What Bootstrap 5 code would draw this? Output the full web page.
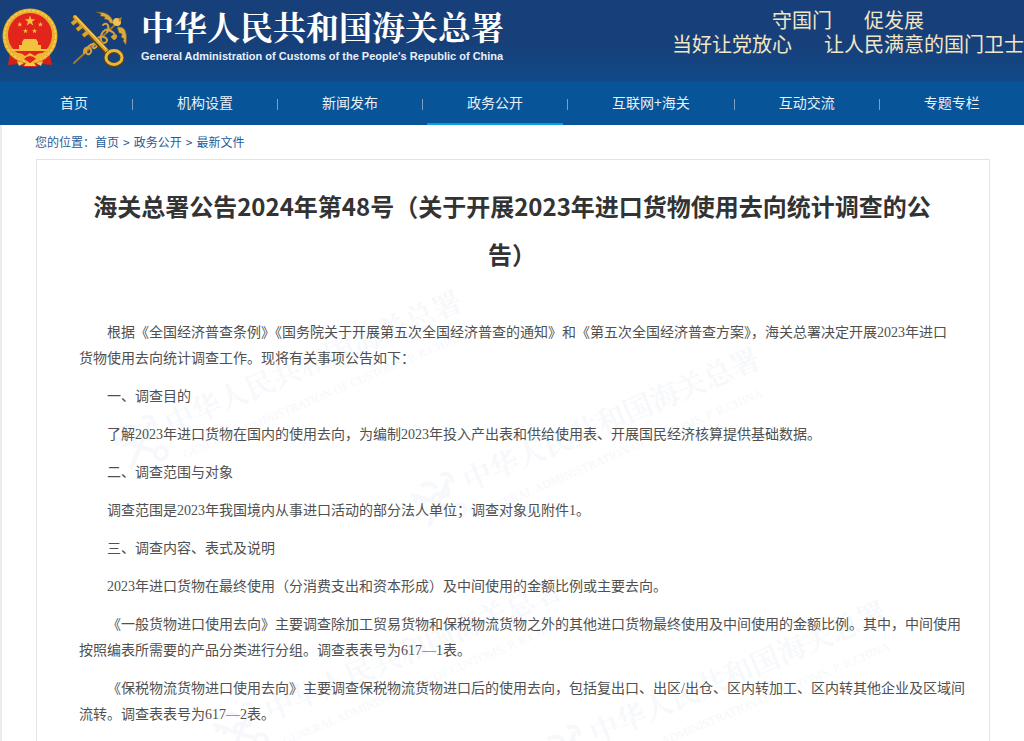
<!DOCTYPE html>
<html lang="zh-CN">
<head>
<meta charset="utf-8">
<meta name="viewport" content="width=device-width, initial-scale=1">
<title>海关总署公告2024年第48号</title>
<link rel="stylesheet" href="https://cdn.jsdelivr.net/npm/bootstrap@5.3.0/dist/css/bootstrap.min.css">
<style>
body { font-family: "Noto Sans CJK SC", sans-serif; color: #333; background: #fff; overflow-x: hidden; }
.site-head { background: linear-gradient(#173f79 0, #173f79 50%, #114a88 100%); height: 82px; }
.site-name { font-family: "Noto Serif CJK SC", "Noto Sans CJK SC", serif; font-size: 33px; line-height: 40px; font-weight: 700; color: #fff; }
.site-name-en { font-family: "Liberation Sans", sans-serif; font-size: 11px; line-height: 20px; font-weight: 700; color: #e9eff7; }
.site-title { padding: 6px 0 0 9px; }
.slogan { font-size: 20px; line-height: 24px; color: #f3e6c4; }
.slogan-row { gap: 32px; }
.main-nav { background: #075499; height: 43px; padding-left: 20px; }
.main-nav a { font-size: 14px; line-height: 41px; padding: 0 40px; color: #e8f0f8; border-bottom: 2px solid transparent; }
.main-nav a.active { border-color: #0a9be6; }
.main-nav li:last-child a { padding-right: 0; }
.main-nav li + li::before { content: ""; width: 1px; height: 11px; margin: 2px 4px 0; background: #7f9fc0; }
.page-body { border-left: 2px solid #ececec; padding: 0 34px 0 33px; }
.crumbs { font-size: 12px; line-height: 34px; color: #1f5c99; }
.crumbs a { color: inherit; }
.notice { border: 1px solid #e3e3e3; border-bottom: 0; padding: 22px 20px 24px 42px; margin-left: 1px; }
.notice-title { font-size: 24px; line-height: 48px; font-weight: 700; color: #333; margin: 0 36px 42px 12px; }
.notice p { font-family: "Liberation Serif", "Noto Sans CJK SC", serif; font-size: 14px; line-height: 26px; color: #505050; text-indent: 2em; margin-bottom: 12px; }
.watermark { left: 0; top: 0; pointer-events: none; color: #f6f8fb; z-index: -1; }
</style>
</head>
<body class="position-relative">
<header>
  <div class="site-head d-flex align-items-start text-nowrap">
    <svg class="flex-shrink-0" width="132" height="74" viewBox="0 0 132 74" aria-hidden="true">
      <path d="M10 52L8 65l11-1 5 3h12l5-3 11 1-3-14z" fill="#d41f1b"/>
      <circle cx="30" cy="36" r="27.500" fill="#e8ae2d"/>
      <circle cx="30" cy="36" r="25.500" fill="none" stroke="#f6d15b" stroke-width="1.500" stroke-dasharray="3 1.500"/>
      <circle cx="30" cy="35" r="22" fill="#e3241c"/>
      <g fill="#f3c23c">
        <path id="st" d="M30 15.500l1.300 3.800h4l-3.200 2.400 1.200 3.900-3.300-2.400-3.300 2.400 1.200-3.900-3.200-2.400h4z"/>
        <use href="#st" transform="translate(4.800 14) scale(.5)"/><use href="#st" transform="translate(25.400 14) scale(.5)"/>
        <use href="#st" transform="translate(10.500 20.500) scale(.5)"/><use href="#st" transform="translate(19.500 20.500) scale(.5)"/>
        <path d="M24 39h12l2 3H22zM22 42h16v3h3v4h8v2H11v-2h8v-4h3z"/>
      </g>
      <path d="M13 53q8-1 12 3l5-3 5 3q4-4 12-3-2 5-11 8H24q-9-3-11-8z" fill="#f0b934"/>
      <path d="M24 59q6-6 12 0l-6 4z" fill="#e3241c"/>
      <path d="M17 61l7 2-5 3zM43 61l-7 2 5 3zM26 63h8l2 3H24z" fill="#f4ca4d"/>
      <g fill="none" stroke-linecap="round">
        <path d="M74 63L117 23" stroke="#a97622" stroke-width="2"/>
        <path d="M84 53c-1-8 9-6 7-1s-8 1-3-5 12-2 7 1 1-14 9-11-2 10-3 3 4-12 8-10 8 4 4 8M103 25c5-4 7 3 4 7M112 37c4-4 6 0 2 2" stroke="#d4a13a" stroke-width="2"/>
        <path d="M75 18L108 53" stroke="#5b4216" stroke-width="6"/>
        <path d="M75 17L108 52" stroke="#d9a52f" stroke-width="4"/>
        <path d="M75 16L106 49" stroke="#ffe28a" stroke-width="1"/>
        <path d="M77 20l-5 4M82 26l-5 4M88 32l-5 4" stroke="#d8a232" stroke-width="4" stroke-linecap="butt"/>
        <ellipse cx="114" cy="58" rx="8" ry="7" stroke="#5b4216" stroke-width="5"/>
        <ellipse cx="114" cy="57.500" rx="8" ry="7" stroke="#e7b83b" stroke-width="3"/>
      </g>
      <path d="M96 12q15-1 18 12l-4-1-2-3-4-1 1-2-5-1 1-2zM117 27q12-2 9 18l-3-4 1-2-3-2 1-3-3-1z" fill="#d9aa41" stroke="#684e20" stroke-width=".6"/>
      <circle cx="117" cy="22" r="4" fill="#edc35a"/><path d="M118 19l4-2-2 5z" fill="#bd892b"/>
    </svg>
    <div class="site-title">
      <div class="site-name">中华人民共和国海关总署</div>
      <div class="site-name-en">General Administration of Customs of the People's Republic of China</div>
    </div>
    <div class="slogan ms-auto pt-2">
      <div class="slogan-row d-flex justify-content-center"><span>守国门</span><span>促发展</span></div>
      <div class="slogan-row d-flex justify-content-center"><span>当好让党放心</span><span>让人民满意的国门卫士</span></div>
    </div>
  </div>
  <nav class="main-nav" aria-label="主导航">
    <ul class="list-unstyled d-flex text-nowrap mb-0">
      <li class="d-flex align-items-center"><a class="d-block text-decoration-none" href="#">首页</a></li>
      <li class="d-flex align-items-center"><a class="d-block text-decoration-none" href="#">机构设置</a></li>
      <li class="d-flex align-items-center"><a class="d-block text-decoration-none" href="#">新闻发布</a></li>
      <li class="d-flex align-items-center"><a class="d-block text-decoration-none active" href="#" aria-current="page">政务公开</a></li>
      <li class="d-flex align-items-center"><a class="d-block text-decoration-none" href="#">互联网+海关</a></li>
      <li class="d-flex align-items-center"><a class="d-block text-decoration-none" href="#">互动交流</a></li>
      <li class="d-flex align-items-center"><a class="d-block text-decoration-none" href="#">专题专栏</a></li>
    </ul>
  </nav>
</header>
<svg class="watermark position-absolute" width="100%" height="100%" aria-hidden="true">
  <defs>
    <g id="wm" fill="currentColor">
      <text x="0" y="11" font-family="Noto Serif CJK SC, Noto Sans CJK SC, serif" font-size="29" font-weight="600">中华人民共和国海关总署</text>
      <text x="4" y="39" font-family="Liberation Serif, serif" font-size="12">GENERAL ADMINISTRATION OF CUSTOMS, P. R.CHINA</text>
      <g fill="none" stroke="currentColor" stroke-width="4"><path d="M-54-8L-22 20M-50 28L-14-8M-54 0l6-6M-48 5l6-6M-42-12q12-2 14 8M-20-15q12 0 9 12M-38 10q4-14 12-6t8-8"/><circle cx="-16" cy="25" r="6"/></g>
    </g>
  </defs>
  <use href="#wm" transform="translate(166 424) rotate(-23)"/>
  <use href="#wm" transform="translate(464 481) rotate(-23)"/>
  <use href="#wm" transform="translate(266 711) rotate(-23)"/>
  <use href="#wm" transform="translate(591 734) rotate(-23)"/>
</svg>
<main class="page-body">
  <nav class="crumbs" aria-label="您的位置">您的位置：<a class="text-decoration-none" href="#">首页</a><span class="mx-1">&gt;</span><a class="text-decoration-none" href="#">政务公开</a><span class="mx-1">&gt;</span><a class="text-decoration-none" href="#">最新文件</a></nav>
  <article class="notice">
    <h1 class="notice-title text-center">海关总署公告2024年第48号（关于开展2023年进口货物使用去向统计调查的公告）</h1>
    <p>根据《全国经济普查条例》《国务院关于开展第五次全国经济普查的通知》和《第五次全国经济普查方案》，海关总署决定开展2023年进口<br>货物使用去向统计调查工作。现将有关事项公告如下：</p>
    <p>一、调查目的</p>
    <p>了解2023年进口货物在国内的使用去向，为编制2023年投入产出表和供给使用表、开展国民经济核算提供基础数据。</p>
    <p>二、调查范围与对象</p>
    <p>调查范围是2023年我国境内从事进口活动的部分法人单位；调查对象见附件1。</p>
    <p>三、调查内容、表式及说明</p>
    <p>2023年进口货物在最终使用（分消费支出和资本形成）及中间使用的金额比例或主要去向。</p>
    <p>《一般货物进口使用去向》主要调查除加工贸易货物和保税物流货物之外的其他进口货物最终使用及中间使用的金额比例。其中，中间使用<br>按照编表所需要的产品分类进行分组。调查表表号为617—1表。</p>
    <p>《保税物流货物进口使用去向》主要调查保税物流货物进口后的使用去向，包括复出口、出区/出仓、区内转加工、区内转其他企业及区域间<br>流转。调查表表号为617—2表。</p>
  </article>
</main>
<script src="https://cdn.jsdelivr.net/npm/bootstrap@5.3.0/dist/js/bootstrap.bundle.min.js"></script>
</body>
</html>
